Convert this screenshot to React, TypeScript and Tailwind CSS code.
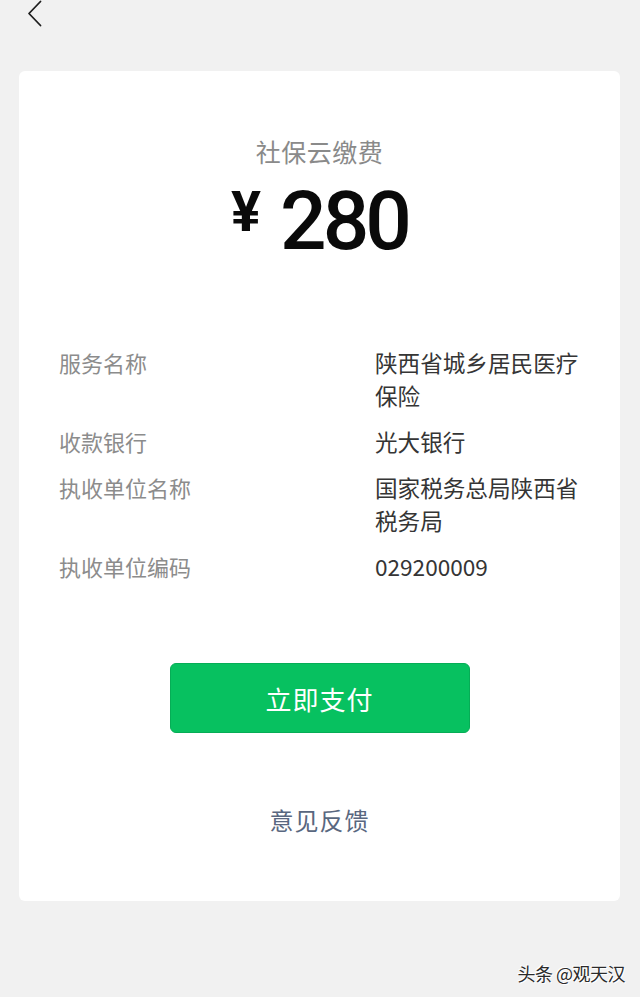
import React from "react";

const cjk = { fontFamily: '"Noto Sans CJK SC", "Noto Sans", sans-serif' };
const num = { fontFamily: 'Roboto, "Noto Sans CJK SC", sans-serif' };

const rows: { label: string; value: string }[] = [
  { label: "服务名称", value: "陕西省城乡居民医疗保险" },
  { label: "收款银行", value: "光大银行" },
  { label: "执收单位名称", value: "国家税务总局陕西省税务局" },
  { label: "执收单位编码", value: "029200009" },
];

export default function App() {
  return (
    <div className="relative w-[640px] h-[997px] bg-[#f1f1f1] overflow-hidden" style={cjk}>
      <div className="h-[71px] overflow-hidden">
        <svg width="24" height="30" viewBox="0 0 24 30" className="block ml-[22px] -mt-[2px]" fill="none">
          <path d="M18.5 3.5 L7 15.5 L18.5 27.5" stroke="#1e1e1e" strokeWidth="1.8" strokeLinecap="round" strokeLinejoin="round" />
        </svg>
      </div>
      <div className="ml-[19px] w-[601px] h-[830px] bg-white rounded-[6px] flex flex-col items-center pt-[64px]">
        <div className="text-[25px] leading-[32px] text-[#8a8a8a] tracking-[0.5px]">社保云缴费</div>
        <div className="flex items-start mt-[13px] text-[#0a0a0a]" style={num}>
          <span className="text-[56px] leading-none font-bold mt-[4px]">¥</span>
          <span className="text-[82px] leading-none font-medium tracking-[-4px] ml-[19px]">280</span>
        </div>
        <div className="mt-[84px] self-start ml-[40px] flex flex-col gap-[13px]">
          {rows.map((r) => (
            <div key={r.label} className="grid grid-cols-[316px_212px] leading-[33px]">
              <div className="text-[22px] text-[#8c8c8c]">{r.label}</div>
              <div className="text-[22.6px] text-[#353535]">{r.value}</div>
            </div>
          ))}
        </div>
        <button className="mt-[80px] w-[300px] h-[70px] rounded-[6px] bg-[#07c160] border border-[#06ad56] text-white text-[26px] tracking-[1px] flex items-center justify-center">
          立即支付
        </button>
        <div className="mt-[71px] text-[24px] leading-[32px] text-[#596780] tracking-[1px]">意见反馈</div>
      </div>
      <div
        className="absolute right-[15px] top-[960px] text-[18px] leading-[26px] text-[#2a2a2a] tracking-[-0.5px]"
        style={{ textShadow: "1px 1px 0 #fff, -1px -1px 0 #fff" }}
      >
        头条 @观天汉
      </div>
    </div>
  );
}
